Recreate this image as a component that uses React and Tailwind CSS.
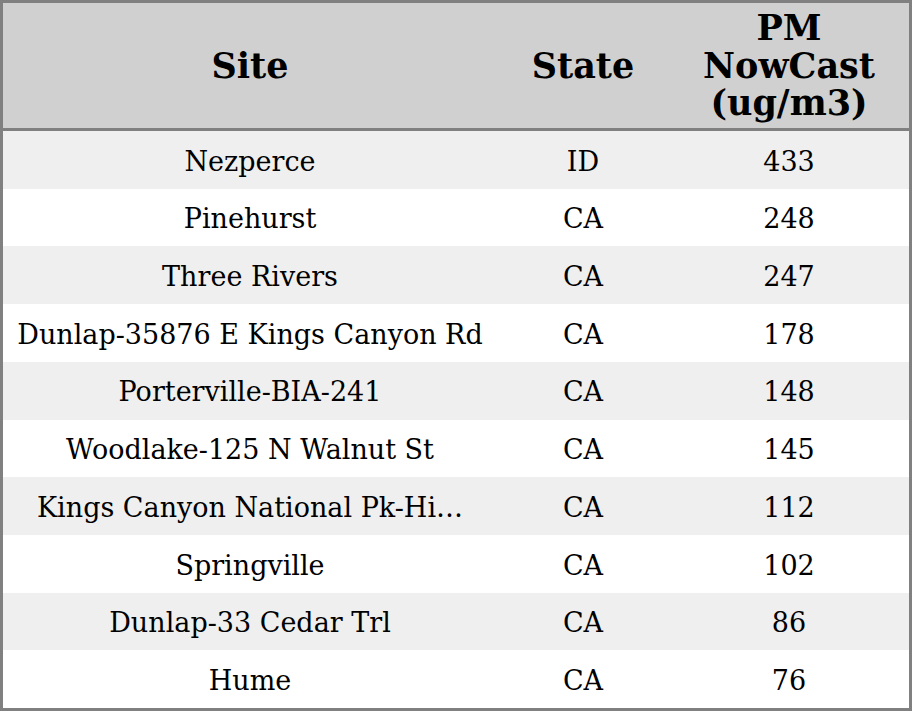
import React from "react";

const rows = [
  ["Nezperce", "ID", "433"],
  ["Pinehurst", "CA", "248"],
  ["Three Rivers", "CA", "247"],
  ["Dunlap-35876 E Kings Canyon Rd", "CA", "178"],
  ["Porterville-BIA-241", "CA", "148"],
  ["Woodlake-125 N Walnut St", "CA", "145"],
  ["Kings Canyon National Pk-Hi…", "CA", "112"],
  ["Springville", "CA", "102"],
  ["Dunlap-33 Cedar Trl", "CA", "86"],
  ["Hume", "CA", "76"],
];

export default function App() {
  return (
    <div className="w-[912px] h-[711px] bg-white">
      <div
        className="w-[912px] h-[711px] border-[3px] border-[#808080] flex flex-col text-black"
        style={{ fontFamily: '"DejaVu Serif", serif' }}
      >
        <div className="h-[128px] shrink-0 bg-[#d0d0d0] border-b-[3px] border-[#808080] grid grid-cols-[494px_172px_240px] items-center text-center font-bold text-[35px] leading-[37.5px]">
          <div>Site</div>
          <div>State</div>
          <div>
            PM
            <br />
            NowCast
            <br />
            (ug/m3)
          </div>
        </div>
        <div className="flex-1 flex flex-col">
          {rows.map((r, i) => (
            <div
              key={i}
              className={`flex-1 grid grid-cols-[494px_172px_240px] items-center text-center text-[27px] pt-1 ${
                i % 2 === 0 ? "bg-[#efefef]" : "bg-white"
              }`}
            >
              <div className="whitespace-nowrap">{r[0]}</div>
              <div>{r[1]}</div>
              <div>{r[2]}</div>
            </div>
          ))}
        </div>
      </div>
    </div>
  );
}
